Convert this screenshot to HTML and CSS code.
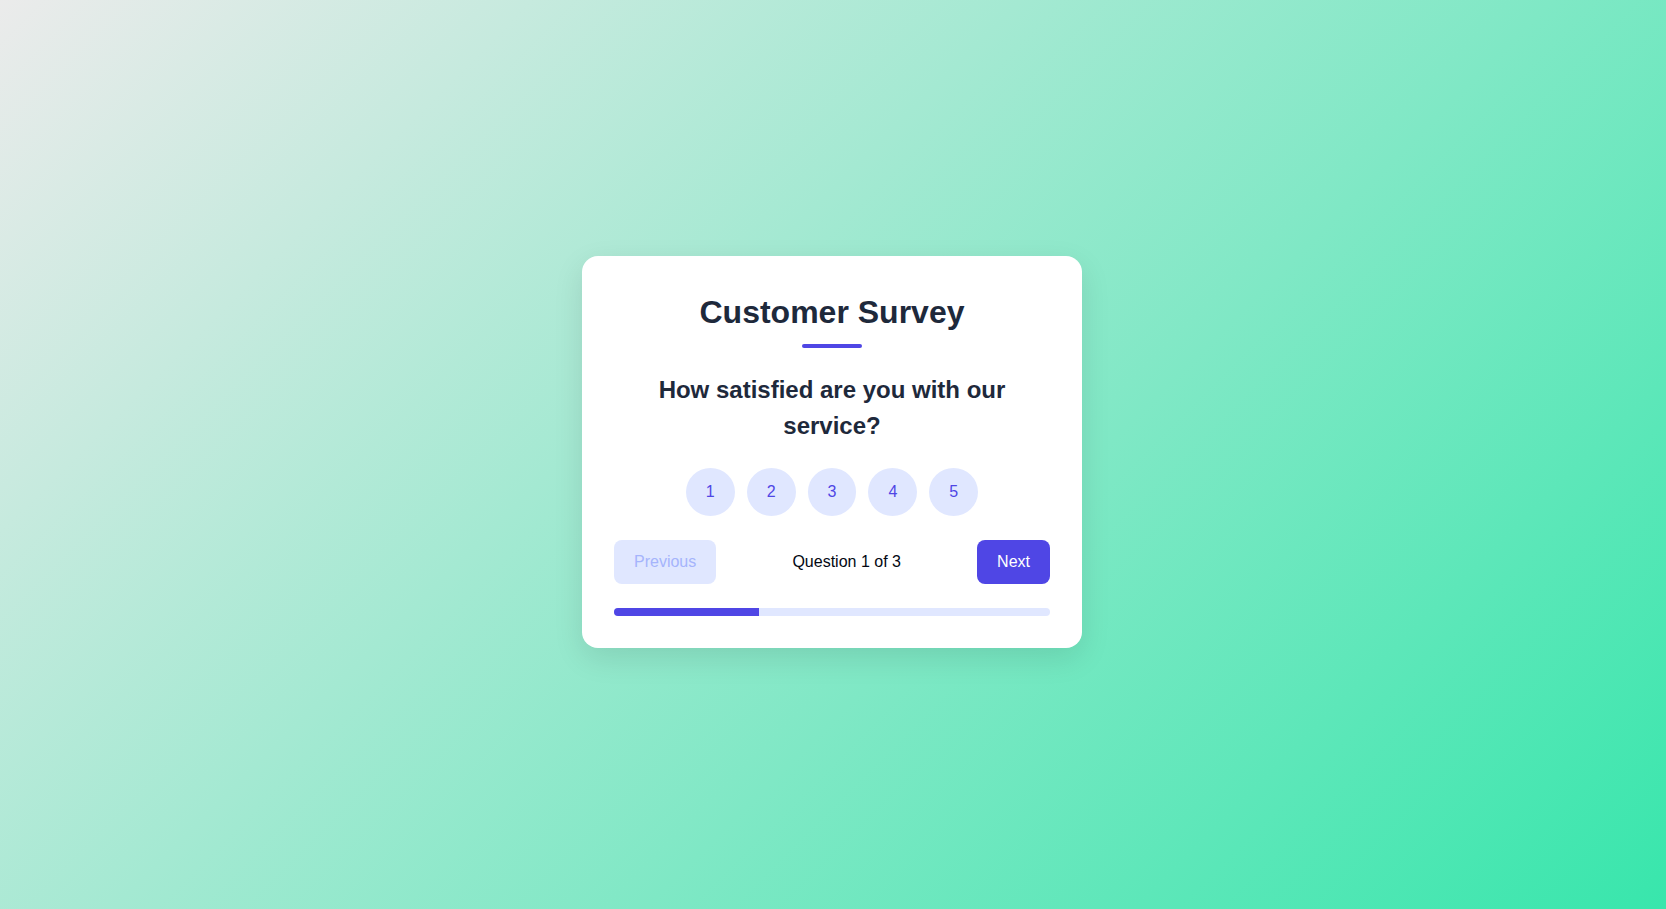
FILE: index.html
```html
<!DOCTYPE html>
<html lang="en">
<head>
<meta charset="UTF-8">
<meta name="viewport" content="width=device-width, initial-scale=1">
<title>Customer Survey</title>
<link rel="stylesheet" href="styles.css">
</head>
<body>
<main class="survey">
  <h1 class="survey-title">Customer Survey</h1>
  <h2 class="question">How satisfied are you with our service?</h2>
  <div class="ratings" role="group" aria-label="Rating">
    <button class="rating" type="button">1</button>
    <button class="rating" type="button">2</button>
    <button class="rating" type="button">3</button>
    <button class="rating" type="button">4</button>
    <button class="rating" type="button">5</button>
  </div>
  <div class="navigation">
    <button class="nav-button" type="button" disabled>Previous</button>
    <span>Question 1 of 3</span>
    <button class="nav-button" type="button">Next</button>
  </div>
  <div class="progress" role="progressbar" aria-label="Survey progress" aria-valuemin="0" aria-valuemax="3" aria-valuenow="1">
    <div class="progress-fill" style="width: 33.3333%"></div>
  </div>
</main>
</body>
</html>
```
FILE: styles.css
```css
* {
  box-sizing: border-box;
}

body {
  margin: 0;
  min-height: 100vh;
  padding: 0 2px 5px 0;
  display: flex;
  align-items: center;
  justify-content: center;
  background: linear-gradient(135deg, #ebebeb, #38e6ac);
  color: #030712;
  font: 16px/24px "Liberation Sans", Arial, sans-serif;
}

h1, h2 {
  margin: 0;
  color: #1e293b;
  font-weight: 700;
  text-align: center;
}

.survey {
  width: 100%;
  max-width: 500px;
  padding: 32px;
  display: flex;
  flex-direction: column;
  gap: 24px;
  background: #fff;
  border-radius: 16px;
  box-shadow: 0 10px 30px rgba(0, 0, 0, 0.1);
}

.survey-title {
  font-size: 32px;
  line-height: 48px;
}

.survey-title::after {
  content: "";
  display: block;
  width: 60px;
  height: 4px;
  margin: 8px auto 0;
  border-radius: 2px;
  background: #4f46e5;
}

.question {
  font-size: 24px;
  line-height: 36px;
}

.ratings {
  display: flex;
  justify-content: center;
  gap: 12px;
}

button {
  border: 0;
  font: inherit;
  cursor: pointer;
}

.rating {
  padding: 12px 20px;
  border-radius: 50%;
  background: #e0e7ff;
  color: #4f46e5;
}

.navigation {
  display: flex;
  align-items: center;
  justify-content: space-between;
}

.nav-button {
  padding: 10px 20px;
  border-radius: 8px;
  background: #4f46e5;
  color: #fff;
}

.nav-button:disabled {
  background: #e0e7ff;
  color: #a5b4fc;
  cursor: not-allowed;
}

.progress {
  height: 8px;
  overflow: hidden;
  border-radius: 4px;
  background: #e0e7ff;
}

.progress-fill {
  height: 100%;
  background: #4f46e5;
}
```
